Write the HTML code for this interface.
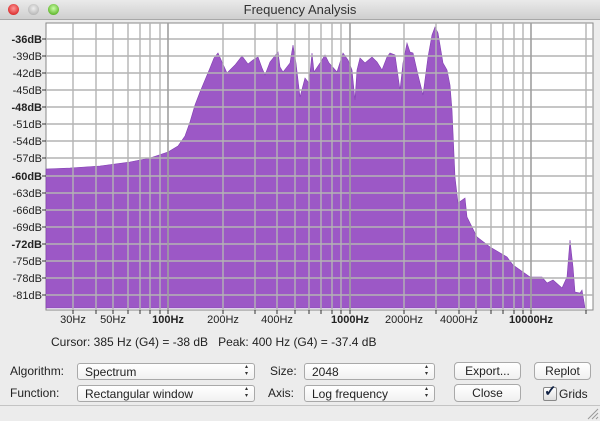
<!DOCTYPE html>
<html><head><style>
body{margin:0;width:600px;height:421px;overflow:hidden;background:#ececec;font-family:"Liberation Sans",sans-serif;font-size:12px;color:#222;position:relative}
.title{position:absolute;left:0;top:0;width:600px;height:19px;background:linear-gradient(#eaeaea,#cfcfcf);border-bottom:1px solid #a8a8a8;text-align:center;line-height:19px;font-size:13px;color:#333}
.dot{position:absolute;top:4px;width:11px;height:11px;border-radius:50%}
.abs{position:absolute;white-space:nowrap}
.pop{position:absolute;height:17px;background:linear-gradient(#fff,#f1f1f1);border:1px solid #a9a9a9;border-radius:3px;box-sizing:border-box;padding-left:7px;line-height:16px;font-size:12px}
.pop:after{content:"\25B4\A\25BE";white-space:pre;position:absolute;right:6px;top:0px;font-size:6px;line-height:7px;color:#333}
.btn{position:absolute;height:18px;background:linear-gradient(#fff,#f0f0f0);border:1px solid #a9a9a9;border-radius:4px;box-sizing:border-box;text-align:center;line-height:16px;font-size:12px}
</style></head><body>
<div class="title">Frequency Analysis</div>
<div class="dot" style="left:8px;background:radial-gradient(circle at 50% 40%,#f99,#d33 70%,#a22)"></div>
<div class="dot" style="left:28px;background:radial-gradient(circle at 50% 40%,#eee,#bbb 70%,#999)"></div>
<div class="dot" style="left:48px;background:radial-gradient(circle at 50% 40%,#cfa,#6b3 70%,#494)"></div>
<svg class="abs" style="left:0;top:0" width="600" height="421">
<rect x="46" y="23" width="547" height="287" fill="#fff" stroke="#888" stroke-width="1"/>
<polygon fill="#9c58c6" stroke="#8040b0" stroke-width="0.6" points="46,308 46,169 70,168 100,166 130,162 150,158 168,152 178,146 185,136 190,122 195,105 200,92 205,80 210,68 214,58 218,53 222,62 227,73 235,65 242,56 248,64 253,60 258,57 262,68 265,75 270,62 278,52 280,67 283,72 290,63 293,45 296,63 300,97 305,78 309,83 312,53 314,72 320,63 325,55 329,63 337,72 343,53 348,60 352,70 355,100 357,70 360,58 365,63 372,57 377,62 382,70 387,57 390,53 395,55 400,90 403,63 407,43 410,52 413,53 418,75 423,95 428,57 432,35 435,27 438,33 443,63 447,70 450,85 452,110 455,177 458,203 465,198 467,217 477,237 490,247 507,257 513,265 530,277 542,277 547,283 553,280 562,288 567,277 570,240 573,267 575,292 580,293 582,290 585,308"/>
<g stroke="#b4b4b4" stroke-width="1.4" fill="none">
<path d="M46 39H593M46 56H593M46 73H593M46 90H593M46 107H593M46 124H593M46 141H593M46 158H593M46 176H593M46 193H593M46 210H593M46 227H593M46 244H593M46 261H593M46 278H593M46 295H593"/>
<path d="M73 23V310M96 23V310M113 23V310M128 23V310M140 23V310M150 23V310M160 23V310M223 23V310M255 23V310M277 23V310M295 23V310M309 23V310M321 23V310M332 23V310M341 23V310M404 23V310M436 23V310M459 23V310M476 23V310M491 23V310M503 23V310M514 23V310M523 23V310M586 23V310"/>
</g>
<path d="M168 23V310M350 23V310M531 23V310" stroke="#a0a0a0" stroke-width="1.6"/>
<g stroke="#333" stroke-width="1"><path d="M42 39H46M42 56H46M42 73H46M42 90H46M42 107H46M42 124H46M42 141H46M42 158H46M42 176H46M42 193H46M42 210H46M42 227H46M42 244H46M42 261H46M42 278H46M42 295H46"/>
<path d="M73 310V314M96 310V314M113 310V314M128 310V314M140 310V314M150 310V314M160 310V314M168 310V314M223 310V314M255 310V314M277 310V314M295 310V314M309 310V314M321 310V314M332 310V314M341 310V314M350 310V314M404 310V314M436 310V314M459 310V314M476 310V314M491 310V314M503 310V314M514 310V314M523 310V314M531 310V314M586 310V314"/></g>
<g font-family="Liberation Sans" font-size="11" text-anchor="end" fill="#222">
<text x="42" y="43" font-weight="bold">-36dB</text><text x="42" y="60">-39dB</text><text x="42" y="77">-42dB</text><text x="42" y="94">-45dB</text><text x="42" y="111" font-weight="bold">-48dB</text><text x="42" y="128">-51dB</text><text x="42" y="145">-54dB</text><text x="42" y="162">-57dB</text><text x="42" y="180" font-weight="bold">-60dB</text><text x="42" y="197">-63dB</text><text x="42" y="214">-66dB</text><text x="42" y="231">-69dB</text><text x="42" y="248" font-weight="bold">-72dB</text><text x="42" y="265">-75dB</text><text x="42" y="282">-78dB</text><text x="42" y="299">-81dB</text>
</g>
<g font-family="Liberation Sans" font-size="11" text-anchor="middle" fill="#222">
<text x="73" y="323">30Hz</text><text x="113" y="323">50Hz</text><text x="168" y="323" font-weight="bold">100Hz</text><text x="223" y="323">200Hz</text><text x="277" y="323">400Hz</text><text x="350" y="323" font-weight="bold">1000Hz</text><text x="404" y="323">2000Hz</text><text x="459" y="323">4000Hz</text><text x="531" y="323" font-weight="bold">10000Hz</text>
</g>
<line x1="0" y1="405.5" x2="600" y2="405.5" stroke="#c4c4c4"/>
<path d="M588 419L598 409M592 419L598 413M596 419L598 417" stroke="#999"/>
</svg>
<div class="abs" style="left:51px;top:335px">Cursor: 385 Hz (G4) = -38 dB&nbsp;&nbsp;&nbsp;Peak: 400 Hz (G4) = -37.4 dB</div>
<div class="abs" style="left:10px;top:364px">Algorithm:</div>
<div class="abs" style="left:10px;top:386px">Function:</div>
<div class="pop" style="left:77px;top:363px;width:178px">Spectrum</div>
<div class="pop" style="left:77px;top:385px;width:178px">Rectangular window</div>
<div class="abs" style="left:270px;top:364px">Size:</div>
<div class="abs" style="left:268px;top:386px">Axis:</div>
<div class="pop" style="left:304px;top:363px;width:131px">2048</div>
<div class="pop" style="left:304px;top:385px;width:131px">Log frequency</div>
<div class="btn" style="left:454px;top:362px;width:67px">Export...</div>
<div class="btn" style="left:454px;top:384px;width:67px">Close</div>
<div class="btn" style="left:534px;top:362px;width:57px">Replot</div>
<div class="abs" style="left:543px;top:387px;width:12px;height:12px;border:1px solid #888;border-radius:2px;background:linear-gradient(#fff,#ddd)"></div>
<div class="abs" style="left:544px;top:382px;font-size:15px;color:#124;font-weight:bold">&#10003;</div>
<div class="abs" style="left:559px;top:387px">Grids</div>
</body></html>
